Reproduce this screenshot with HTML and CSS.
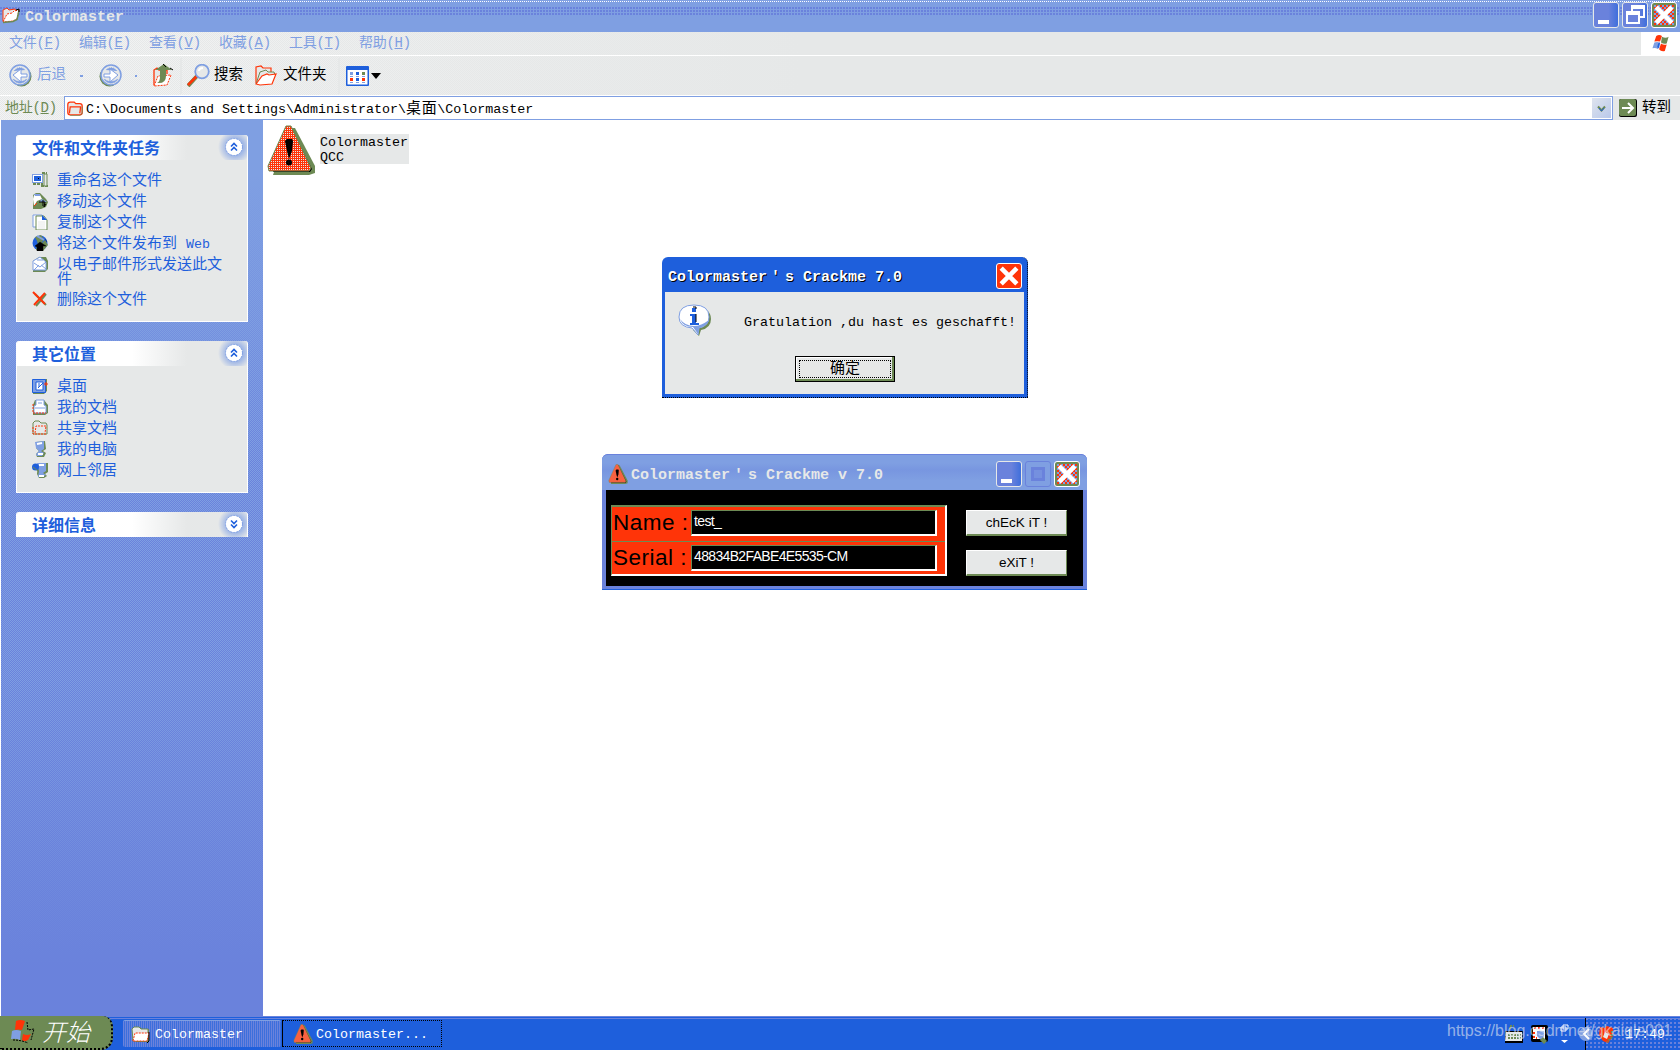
FILE: index.html
```html
<!DOCTYPE html>
<html lang="zh-CN">
<head>
<meta charset="utf-8">
<title>Colormaster</title>
<link rel="stylesheet" href="styles.css">
</head>
<body>
<svg class="defs" width="0" height="0">
  <defs>
    <pattern id="redmesh" width="2" height="2" patternUnits="userSpaceOnUse"><rect width="2" height="2" fill="#ff3408"/><path d="M0 0h1v1H0z" fill="#e6e8e8"/></pattern>
    <symbol id="warn" viewBox="0 0 48 50">
      <path d="M22 3h6l20 38v7l-6 2H6z" fill="#6d8a54"/>
      <path d="M24 2l21 42-2 3H6z" fill="#000"/>
      <path d="M19 1h5l20 42-2 3H2l-1-5z" fill="url(#redmesh)" stroke="#6d8a54"/>
      <path d="M18 16l2-2h5l1 2-1 10-3 8-2-8z"/><circle cx="22" cy="37.500" r="3"/>
    </symbol>
    <symbol id="folder" viewBox="0 0 20 18">
      <path d="M3 3l1-2h5l2 2h7v13H5z" fill="#6d8a54"/>
      <path d="M1 3l2-2h5l2 2h7v3L16 15H2z" fill="#e6e8e8" stroke="#6d8a54"/>
      <path d="M2 15L4 7h14l-2 8z" fill="#fff" stroke="#ff3408" stroke-dasharray="2 1"/>
      <path d="M18 6v9l-2 2" fill="none" stroke="#000"/>
    </symbol>
    <symbol id="openfolder" viewBox="0 0 18 17">
      <path d="M1 14V3l4-2 2 2 6-1 1 3z" fill="#e6e8e8" stroke="#ff3408"/>
      <path d="M1 15l4-8 5-1 2-2 5-1-2 9-4 2z" fill="#fff" stroke="#ff3408" stroke-dasharray="2 1"/>
      <path d="M1 15.500l10-1 4-2 2-9" fill="none" stroke="#6d8a54" stroke-width="1.500"/><path d="M14 3l3-1v3" fill="none" stroke="#000"/>
    </symbol>
    <symbol id="flag" viewBox="0 0 20 20">
      <path d="M5 2q3-2 6 0L9 8q-3-1-6 0z" fill="#ff3408"/><path d="M11 3q4 2 7 0l-2 7q-3 1-6-1z" fill="#6d8a54"/>
      <path d="M3 9q3-1 6 0l-2 7q-3-2-6-1z" fill="#7f9fe2"/><path d="M10 10q3 2 6 1l-2 7q-4 1-6-2z" fill="#ff3408"/>
      <path d="M7 10l2-1-1 6-2-1z" fill="#1e5fdc"/>
    </symbol>
    <symbol id="cross" viewBox="0 0 26 26"><path d="M4.500 4.500l17 17M21.500 4.500l-17 17" stroke="#fff" stroke-width="5" fill="none"/></symbol>
    <symbol id="ball" viewBox="0 0 23 23"><circle cx="12.500" cy="12.500" r="10" fill="#6d8a54"/><circle cx="11" cy="11" r="10" fill="#e6e8e8" stroke="#7f9fe2" stroke-width="1.500"/><path d="M4 15a8 8 0 0 0 14 0q-7 5-14 0M5 7q5-6 11-1" fill="#7f9fe2" stroke="#7f9fe2" stroke-dasharray="1 1"/><path d="M18 10h-6V5l-8 6 8 7v-5h6z" fill="#fff" stroke="#7f9fe2"/></symbol>
    <symbol id="chev" viewBox="0 0 18 18"><circle cx="9" cy="9" r="8.500" fill="#fff" stroke="#7f9fe2" stroke-dasharray="2 1"/><path d="M6 8.500l3-3 3 3M6 12.500l3-3 3 3" fill="none" stroke="#1e5fdc" stroke-width="1.600"/></symbol>
  </defs>
</svg>

<div class="screen">
  <header class="titlebar">
    <svg class="ico20"><use href="#openfolder"/></svg>
    <span class="caption">Colormaster</span>
    <div class="winbtns">
      <i class="wb min"></i><i class="wb restore"><b></b><b></b></i><i class="wb close dim"><svg><use href="#cross"/></svg></i>
    </div>
  </header>

  <nav class="menubar">
    <div class="menus">
      <span>文件(<u>F</u>)</span><span>编辑(<u>E</u>)</span><span>查看(<u>V</u>)</span><span>收藏(<u>A</u>)</span><span>工具(<u>T</u>)</span><span>帮助(<u>H</u>)</span>
    </div>
    <div class="brand"><svg width="20" height="19"><use href="#flag"/></svg></div>
  </nav>

  <div class="toolbar">
    <svg class="back" width="23" height="23"><use href="#ball"/></svg><span class="off lbl-back">后退</span><i class="tick"></i>
    <svg class="fwd" width="23" height="23"><use href="#ball"/></svg><i class="tick second"></i>
    <svg class="up" width="20" height="23" viewBox="0 0 20 23"><path d="M1 21V6l3-2 2 2h8v4" fill="#e6e8e8" stroke="#ff3408" stroke-width="1.300"/><path d="M1 22l4-10 13-1-4 10z" fill="#fff" stroke="#ff3408" stroke-dasharray="2 1"/><path d="M11 0L2 6h5v7q0 5-3 6 9 1 9-7V6h6z" fill="#6d8a54"/><path d="M10 0l3 3M17 4l3 2" stroke="#000"/></svg>
    <i class="sep"></i>
    <svg class="search" width="23" height="23" viewBox="0 0 23 23"><path d="M10 12L1 22" stroke="#6d8a54" stroke-width="4"/><path d="M10 12L1 21" stroke="#ff3408" stroke-width="2.500"/><circle cx="15" cy="7.500" r="6.800" fill="#e6e8e8" stroke="#7f9fe2" stroke-width="1.800"/><path d="M12 7q0-3 4-3" stroke="#fff" stroke-width="2" fill="none"/></svg>
    <span class="lbl-search">搜索</span>
    <svg class="folders" width="22" height="21" viewBox="0 0 22 21"><path d="M1 18V2l5-1 2 2h8v5" fill="#e6e8e8" stroke="#ff3408" stroke-width="1.200"/><path d="M1 19L5 7l6-2 2 2h6l1 3" fill="#e6e8e8" stroke="#6d8a54"/><path d="M1 19l6-8 5-2 2 1 7-1-4 10-12 1z" fill="#fff" stroke="#ff3408" stroke-width="1.200"/></svg>
    <span class="lbl-folders">文件夹</span>
    <i class="sep sep2"></i>
    <svg class="view" width="23" height="20" viewBox="0 0 23 20"><rect width="23" height="20" rx="1" fill="#1e5fdc"/><path d="M1.500 4h20v14.500h-20z" fill="#fff"/><g fill="#7f9fe2"><path d="M4 6h3v3H4zM4 16h3v1H4zM10 16h3v1h-3zM16 16h3v1h-3zM4 10h3v1H4zM10 10h3v1h-3zM16 10h3v1h-3z"/></g><path d="M10 6h3v3h-3zM10 12h3v3h-3z" fill="#1e5fdc"/><path d="M16 6h3v3h-3z" fill="#6d8a54"/><path d="M4 12h3v3H4zM16 12h3v3h-3z" fill="#ff3408"/></svg>
    <i class="drop"></i>
  </div>

  <div class="address">
    <span class="addr-label">地址(<u>D</u>)</span>
    <div class="addr-box">
      <svg width="16" height="15" viewBox="0 0 20 18"><path d="M1 4q0-3 3-3h5l2 2h5q3 0 3 3v8q0 3-3 3H4q-3 0-3-3z" fill="#e6e8e8" stroke="#ff3408" stroke-width="1.600"/><path d="M3 15l1-8h13l-1 8" fill="none" stroke="#ff3408" stroke-width="1.600"/><path d="M19 7v8l-3 3H4" fill="none" stroke="#6d8a54"/></svg>
      <span>C:\Documents and Settings\Administrator\<b class="han">桌面</b>\Colormaster</span>
      <i class="combo"><svg width="9" height="7"><path d="M1 1.500l3.500 4 3.500-4" fill="none" stroke="#6d8a54" stroke-width="2"/><path d="M2 3l2.500 3L7 3" fill="none" stroke="#1e5fdc"/></svg></i>
    </div>
    <svg class="go" width="18" height="18"><rect width="18" height="18" rx="2" fill="#000"/><rect width="17" height="17" rx="2" fill="#6d8a54"/><path d="M3 9h11M9 4l5 5-5 5" fill="none" stroke="#fff" stroke-width="2"/></svg>
    <span>转到</span>
  </div>

  <main class="main">
    <aside class="side">
      <section class="panel">
        <h2><span>文件和文件夹任务</span><svg><use href="#chev"/></svg></h2>
        <ul class="tasks">
          <li><svg viewBox="0 0 16 16"><path d="M0 2h11v9H0z" fill="#7f9fe2"/><path d="M1 3h9v7H1z" fill="#fff"/><path d="M2 4h7v5H2z" fill="#1e5fdc"/><path d="M1 12h10M10 1h5M9 14h7" stroke="#6d8a54" stroke-width="2" stroke-dasharray="3 1"/><path d="M12 2h3v12h-3z" fill="#e6e8e8" stroke="#6d8a54"/><path d="M6 6h1v1H6z"/></svg><span>重命名这个文件</span></li>
          <li><svg viewBox="0 0 16 16"><path d="M1 2l3-2h4l3 3 3 3 2 3-2 5-5 2H1z" fill="#6d8a54"/><path d="M2 2h6l2 4-5 2-3 5-1-7z" fill="#fff"/><path d="M2 1h6v2H3zM7 9l3-3 5 3" fill="#7f9fe2"/><path d="M7 9h6l-1 5 2-3M11 7v6" fill="none" stroke="#000"/><path d="M2 13l3-3" stroke="#ff3408"/></svg><span>移动这个文件</span></li>
          <li><svg viewBox="0 0 16 16"><path d="M1 1h9v12H1z" fill="#fff" stroke="#7f9fe2"/><path d="M4 2h8l3 4v10H4z" fill="#fff" stroke="#6d8a54"/><path d="M10 1l5 5h-5z" fill="#1e5fdc"/><path d="M6 8h7M6 10h7M6 12h7M6 14h7" stroke="#e6e8e8"/></svg><span>复制这个文件</span></li>
          <li><svg viewBox="0 0 16 16"><circle cx="8" cy="8" r="7.500" fill="#1e5fdc"/><path d="M3 2l6-2 3 4-3 5-3 1-1-4zM9 9l4-4 3 5-5 6-7-1 1-4z" fill="#6d8a54"/><path d="M3 11l5-4 6 4h-3v5H5v-4zM13 4l2 3" stroke="#000" stroke-width=".4"/><path d="M5 1l7 4" stroke="#7f9fe2" stroke-width="2"/></svg><span>将这个文件发布到 <small>Web</small></span></li>
          <li class="two"><svg viewBox="0 0 16 16"><path d="M1 5l6-4h7l2 4v8l-3 3H1z" fill="#6d8a54"/><path d="M1 5l7-4 6 5v8H1z" fill="#fff" stroke="#7f9fe2"/><path d="M2 7l6 4 6-5M2 14l5-5M14 13l-5-4M5 4h6" fill="none" stroke="#7f9fe2"/></svg><span>以电子邮件形式发送此文<br>件</span></li>
          <li><svg viewBox="0 0 16 16"><path d="M3 3l11 11M14 3L4 15" stroke="#6d8a54" stroke-width="2"/><path d="M1 1l12 12M13 2L2 14" stroke="#ff3408" stroke-width="2"/></svg><span>删除这个文件</span></li>
        </ul>
      </section>
      <section class="panel places">
        <h2><span>其它位置</span><svg><use href="#chev"/></svg></h2>
        <ul class="tasks">
          <li><svg viewBox="0 0 16 16"><path d="M2 1h13v12l-3 3H1z" fill="#6d8a54"/><path d="M.5 1.500h13v13H.5z" fill="#7f9fe2" stroke="#1e5fdc"/><path d="M4 4h7v8H4z" fill="#fff" stroke="#1e5fdc"/><path d="M6 10l5-5M7 5v4" stroke="#1e5fdc"/><path d="M12 6h4M14 4v4" stroke="#ff3408"/></svg><span>桌面</span></li>
          <li><svg viewBox="0 0 16 16"><path d="M3 1h9l4 5v8l-3 2H1V6z" fill="#6d8a54"/><path d="M2 7l2-1V1h8v5l2 1v7H2z" fill="#fff" stroke="#7f9fe2"/><path d="M1 5v9h13" fill="none" stroke="#ff3408" stroke-dasharray="2 1"/><path d="M6 4h4M3 9h10" stroke="#7f9fe2"/></svg><span>我的文档</span></li>
          <li><svg viewBox="0 0 16 16"><path d="M1 14V3l2-2h4l2 2h5l1 2v9z" fill="#e6e8e8" stroke="#6d8a54"/><path d="M1 7v7h13M3 13l1-7h10l-1 7" fill="none" stroke="#ff3408" stroke-dasharray="2 1"/></svg><span>共享文档</span></li>
          <li><svg viewBox="0 0 16 16"><path d="M4 1l9-1 1 8-3 2 3 2-2 4H5l-1-3 3-3-3-3z" fill="#6d8a54"/><path d="M3 1l9-1v8l-3 2 3 2-2 3H5l-1-2 3-3-3-3z" fill="#7f9fe2"/><path d="M5 3l5-1M6 13h5" stroke="#fff" stroke-width="2"/></svg><span>我的电脑</span></li>
          <li><svg viewBox="0 0 16 16"><path d="M6 1h10v9l-3 2 2 2-3 2H7L5 12z" fill="#6d8a54"/><path d="M5 1h9v8l-3 2 3 2-4 2H6l1-6z" fill="#7f9fe2"/><circle cx="3.500" cy="5" r="3.500" fill="#1e5fdc"/><path d="M7 3h5M7 14h5" stroke="#fff" stroke-width="2"/><path d="M1 5l5 4" stroke="#6d8a54"/></svg><span>网上邻居</span></li>
        </ul>
      </section>
      <section class="panel folded"><h2><span>详细信息</span><svg class="down"><use href="#chev"/></svg></h2></section>
    </aside>
    <div class="files">
      <div class="file"><svg width="48" height="50"><use href="#warn"/></svg><p>Colormaster<br>QCC</p></div>
    </div>
  </main>

  <footer class="taskbar">
    <div class="start"><svg width="25" height="25" viewBox="0 0 25 25"><path d="M6 1q4-2 9 0l-3 9q-4-1-7 0z" fill="#ff3408"/><path d="M2 11q4-2 9 0l-1 9q-4-2-9-1z" fill="#7f9fe2"/><path d="M13 14q4 2 8 0l-3 6q-4 2-6 0z" fill="#ff3408"/><path d="M17 2l1 8 6-1-3 11M3 20q8 0 15 3" fill="none" stroke="#000" stroke-dasharray="2 1"/></svg><span>开始</span></div>
    <div class="task"><svg class="ico20"><use href="#folder"/></svg><span>Colormaster</span></div>
    <div class="task on"><svg class="ico20"><use href="#warn"/></svg><span>Colormaster...</span></div>
    <div class="tray">
      <svg width="20" height="19" viewBox="0 0 20 19"><path d="M1 6h18v12H1z" fill="#000"/><path d="M2 7h16v9H1z" fill="#e6e8e8"/><path d="M4 10h13M4 13h13M6 4V1h4" fill="none" stroke="#6d8a54" stroke-width="2" stroke-dasharray="2 1"/></svg>
      <svg class="t2" width="18" height="19" viewBox="0 0 18 19"><rect width="17" height="17" rx="2"/><path d="M2 2h12v12H2z" fill="#fff"/><path d="M3 3h10M3 7v6h3" fill="none" stroke="#ff3408" stroke-width="2" stroke-dasharray="2 2"/><path d="M6 6h7v5l-3 4-4-4z" fill="#7f9fe2"/><path d="M12 12l4 4-3 3-4-4z" fill="#6d8a54"/></svg>
      <svg class="t3" width="9" height="20" viewBox="0 0 9 20"><path d="M3 1h5v4H3zM1 3h5v4H1z" fill="#1e5fdc" stroke="#fff"/><path d="M1 16h7l-3.500 3z" fill="#fff"/></svg>
      <div class="notify">
        <svg class="t4" width="14" height="16" viewBox="0 0 14 16"><circle cx="7" cy="8" r="7" fill="#7f9fe2"/><path d="M10 3L5 8l5 5" fill="none" stroke="#fff" stroke-width="2"/></svg>
        <svg class="t5" width="15" height="17" viewBox="0 0 15 17"><path d="M1 1l4 1 3-2 6 2v8l-5 7-5-2-4-6z" fill="#ff3408"/><path d="M6 6l4 2-2 5-4-2z" fill="#e6e8e8"/><path d="M13 5v6l-5 5" fill="none" stroke="#6d8a54" stroke-width="2" stroke-dasharray="2 1"/></svg>
        <span>17:49</span>
      </div>
    </div>
  </footer>

  <div class="mark">https://blog.csdn.net/gkaigle001</div>

  <div class="win msgbox">
    <div class="wtitle"><span>Colormaster<em>′</em>s Crackme 7.0</span><i class="wb close"><svg><use href="#cross"/></svg></i></div>
    <div class="msgbody">
      <div class="msgline">
        <svg width="34" height="33" viewBox="0 0 34 33"><path d="M18 3q15 1 15 12 0 9-10 11l-2 6-6-6z" fill="#6d8a54"/><path d="M16 1q15 0 15 12 0 9-10 11l-1 7-6-7Q1 23 1 13 1 1 16 1z" fill="#fff" stroke="#7f9fe2"/><path d="M2 15q3 8 13 8l5 7 1-6q8-2 10-8-8 6-15 6Q7 22 2 15z" fill="#7f9fe2"/><path d="M14 4h4v4h-4zM12 10h6v9h3v2h-9v-2h2v-7h-2z" fill="#1e5fdc"/><path d="M15 3h3v2M18 10v8" stroke="#000" fill="none"/></svg>
        <span>Gratulation ,du hast es geschafft!</span>
      </div>
      <div class="ok"><span>确定</span></div>
    </div>
  </div>

  <div class="win crackme">
    <div class="wtitle"><svg width="20" height="20"><use href="#warn"/></svg><span>Colormaster<em>′</em>s Crackme v 7.0</span><i class="wb min"></i><i class="wb maxoff"></i><i class="wb close dim"><svg><use href="#cross"/></svg></i></div>
    <div class="crackbody">
      <div class="form">
        <div class="row"><label>Name :</label><div class="field">test_</div></div>
        <div class="row"><label>Serial :</label><div class="field serial">48834B2FABE4E5535-CM</div></div>
      </div>
      <div class="acts"><div class="act">chEcK iT !</div><div class="act">eXiT !</div></div>
    </div>
  </div>
</div>
</body>
</html>
```
FILE: styles.css
```css
:root {
  --sky: #7f9fe2;
  --peri: #6a82dc;
  --blue: #1e5fdc;
  --face: #e6e8e8;
  --moss: #6d8a54;
  --red: #ff3408;
}
* { box-sizing: border-box; }
body {
  margin: 0;
  font: 13.33px/15px "Liberation Mono", "Noto Sans CJK SC", monospace;
  color: #000;
}
.defs { position: absolute; }
i, em { font-style: normal; }
svg { display: block; flex: none; }
.ico20 { width: 20px; height: 20px; }
.screen {
  position: relative;
  width: 1680px;
  height: 1050px;
  overflow: hidden;
  display: flex;
  flex-direction: column;
  background: #fff;
}

/* main window caption */
.titlebar {
  height: 32px;
  flex: none;
  display: flex;
  align-items: center;
  padding: 0 3px 2px 2px;
  background:
    radial-gradient(circle at 1px 1px, var(--peri) 0.8px, transparent 1px) 0 7px / 3px 3px repeat-x,
    radial-gradient(circle at 1px 1px, var(--peri) 0.8px, transparent 1px) 0 10px / 3px 3px repeat-x,
    radial-gradient(circle at 1px 1px, var(--peri) 0.8px, transparent 1px) 0 13px / 3px 3px repeat-x,
    repeating-linear-gradient(90deg, #fff 0 1px, var(--sky) 1px 2px) 12px 1px / 100% 1px no-repeat,
    var(--sky);
}
.caption { flex: 1; margin: 5px 0 0 5px; font-size: 15px; font-weight: bold; color: var(--face); }
.titlebar .ico20 { width: 18px; height: 17px; }
.winbtns { display: flex; gap: 3px; margin-right: -1px; }
.titlebar .winbtns { margin-right: 0; }
.wb {
  position: relative;
  width: 26px;
  height: 26px;
  flex: none;
  border: 1px solid var(--face);
  border-radius: 3px;
  background: linear-gradient(90deg, var(--peri) 60%, #3f6fdc);
}
.wb svg { width: 24px; height: 24px; }
.min::after { content: ""; position: absolute; left: 4px; bottom: 3px; width: 11px; height: 4px; background: #fff; }
.restore b { position: absolute; border: 2px solid #fff; border-top-width: 4px; width: 14px; height: 13px; left: 8px; top: 2px; }
.restore b + b { left: 3px; top: 8px; background: var(--peri); }
.close { background: var(--red); }
.close.dim {
  background: repeating-conic-gradient(var(--red) 0 25%, var(--sky) 0 50%) 0 0 / 4px 4px;
  border: 1px solid #fff;
  box-shadow: inset 0 0 0 2px var(--moss);
}
.maxoff { border-color: var(--peri); background: var(--sky); }
.maxoff::after { content: ""; position: absolute; inset: 5px; border: 3px solid var(--peri); background: #7590df; }

/* menu, toolbar and address bars */
.menubar, .toolbar, .address {
  flex: none;
  display: flex;
  align-items: center;
  background:
    linear-gradient(90deg, transparent, var(--face) 800px),
    repeating-conic-gradient(#f3f4f4 0 25%, var(--face) 0 50%) 0 0 / 2px 2px;
}
.menubar { height: 24px; border-bottom: 1px solid #fff; color: var(--sky); }
.menus { flex: 1; display: flex; gap: 16px; padding-left: 9px; }
.menus span { width: 54px; white-space: nowrap; }
.menus span, .addr-label { font-size: 14px; letter-spacing: -0.3px; }
.brand { width: 39px; height: 23px; background: #fff; padding: 2px 0 0 10px; }
.toolbar { height: 40px; border-bottom: 1px solid #fff; padding-left: 9px; font-size: 14.5px; }
.off { color: var(--sky); }
.lbl-back { margin-left: 5px; width: 43px; }
.tick { width: 3px; height: 2px; background: var(--sky); }
.tick.second { margin-left: 13px; width: 2px; }
.fwd { margin-left: 16px; transform: scaleX(-1); }
.up { margin-left: 16px; }
.sep { width: 2px; height: 36px; margin-left: 7px; background: var(--face); }
.search { margin-left: 5px; }
.lbl-search { margin-left: 4px; width: 41px; white-space: nowrap; }
.lbl-folders { margin-left: 6px; width: 51px; white-space: nowrap; }
.sep2 { margin-left: 4px; }
.view { margin-left: 6px; }
.drop { margin-left: 2px; border: 5px solid transparent; border-top: 6px solid #000; border-bottom: 0; }
.address { height: 24px; padding-left: 5px; font-size: 14.5px; }
.addr-label { width: 59px; color: var(--moss); }
.addr-box {
  width: 1549px;
  height: 24px;
  display: flex;
  align-items: center;
  gap: 3px;
  padding: 0 1px 0 2px;
  border: 1px solid var(--sky);
  background: #fff;
  font-size: 13.33px;
}
.addr-box span { flex: 1; padding-top: 2px; }
.han { font-weight: normal; font-size: 15px; line-height: 14px; letter-spacing: 0.7px; }
.combo { width: 19px; height: 20px; display: grid; place-items: center; background: linear-gradient(135deg, #dfe4ee, #b9c8ea); }
.go { margin: 0 5px 0 6px; }

/* explorer body */
.main { flex: 1; display: flex; min-height: 0; }
.side {
  width: 263px;
  padding: 15px 15px 0;
  border-left: 1px solid #fff;
  display: flex;
  flex-direction: column;
  gap: 19px;
  color: var(--blue);
  background:
    linear-gradient(180deg, var(--sky) 50px, transparent 340px, transparent 560px, var(--peri) 850px),
    repeating-conic-gradient(var(--sky) 0 25%, var(--peri) 0 50%) 0 0 / 2px 2px;
}
.panel { border: 1px solid #fff; border-top: 0; border-radius: 3px 3px 0 0; background: var(--face); height: 187px; flex: none; }
.panel.places { height: 152px; }
.panel.folded { height: 25px; border-bottom: 0; }
.panel h2 {
  margin: 0;
  height: 25px;
  padding: 0 4px 0 15px;
  display: flex;
  align-items: center;
  justify-content: space-between;
  font-size: 16px;
  border-radius: 3px 3px 0 0;
  background:
    radial-gradient(circle at 218px 12px, #a3b9e6 9px, transparent 17px),
    linear-gradient(90deg, #fff 115px, var(--face) 170px);
}
.panel h2 span { padding-top: 5px; }
.panel h2 svg { width: 18px; height: 18px; margin-bottom: 1px; }
.panel h2 .down { transform: scaleY(-1); }
.tasks { list-style: none; margin: 0; padding: 12px 0 0 15px; font-size: 15px; }
.tasks li { height: 21px; display: flex; align-items: flex-start; gap: 9px; white-space: pre; }
.tasks li span { padding-top: 2px; }
.tasks li.two { height: 35px; }
.tasks small { font-size: 13.33px; }
.tasks svg { width: 16px; height: 16px; }
.files { flex: 1; padding: 5px 0 0 4px; }
.file { display: flex; gap: 5px; align-items: flex-start; }
.file p { margin: 9px 0 0; background: var(--face); width: 89px; height: 30px; padding-top: 1px; }

/* taskbar */
.taskbar {
  height: 34px;
  flex: none;
  display: flex;
  background: linear-gradient(180deg, var(--peri) 1px, var(--blue) 1px 2px, var(--peri) 2px 3px, var(--blue) 3px);
  color: #fff;
}
.start {
  width: 113px;
  margin-right: 10px;
  display: flex;
  align-items: center;
  gap: 10px;
  padding-left: 10px;
  border-radius: 0 10px 12px 0;
  border-bottom: 2px dotted #000;
  border-right: 2px dotted #000;
  background: var(--moss);
  font-size: 24px;
  line-height: 30px;
}
.start span { transform: skewX(-14deg); font-weight: 300; padding-top: 5px; margin-left: -1px; }
.task {
  width: 158px;
  height: 27px;
  margin-top: 4px;
  padding: 1px 0 0 8px;
  display: flex;
  align-items: center;
  gap: 4px;
  background: repeating-linear-gradient(90deg, var(--peri) 0 1px, #3c6fdc 1px 2px);
  border-top: 1px solid var(--sky);
  border-radius: 2px;
}
.task.on { width: 160px; margin-left: 1px; padding-left: 10px; gap: 3px; background: var(--blue); border: 1px dotted #000; border-left: 1px solid #000; border-radius: 0; }
.tray { margin-left: auto; display: flex; align-items: center; width: 176px; padding-top: 2px; }
.t2 { margin-left: 7px; }
.t3 { margin-left: 11px; }
.notify {
  margin-left: 16px;
  height: 32px;
  width: 95px;
  border-left: 1px solid #000;
  display: flex;
  align-items: center;
  background: radial-gradient(circle at 1px 1px, var(--peri) 0.7px, transparent 1px) 0 0 / 4px 4px;
}
.t4 { margin-left: -7px; }
.t5 { margin: 0 11px 0 6px; }
.mark { position: absolute; left: 1447px; top: 1021px; font: 16px/20px "Liberation Sans", sans-serif; color: rgba(225, 230, 240, 0.62); }

/* floating windows */
.win { position: absolute; border-radius: 6px 6px 0 0; }
.wtitle { display: flex; align-items: center; font-size: 15px; font-weight: bold; }
.wtitle span { flex: 1; white-space: pre; padding-top: 3px; }
.wtitle em { display: inline-block; width: 18px; padding-left: 4px; }
.msgbox {
  left: 662px;
  top: 257px;
  width: 366px;
  height: 141px;
  padding: 0 3px 3px;
  background: var(--blue);
  border-right: 1px dotted #000;
  border-bottom: 1px dotted #000;
}
.msgbox .wtitle { height: 35px; padding: 2px 2px 0 3px; color: #fff; text-shadow: 1px 1px #000; }
.msgbox .wb { border-color: #fff; }
.msgbody { height: 102px; background: var(--face); padding: 12px 0 0 13px; }
.msgline { display: flex; height: 52px; gap: 32px; white-space: pre; }
.msgline span { padding-top: 11px; }
.ok {
  width: 100px;
  height: 26px;
  margin-left: 117px;
  border: 1px solid #000;
  box-shadow: inset -2px -2px var(--moss), inset 1px 1px #fff;
  padding: 3px;
  font-size: 15px;
}
.ok span { display: block; height: 18px; line-height: 18px; border: 1px dotted #000; text-align: center; }
.crackme {
  left: 602px;
  top: 454px;
  width: 485px;
  height: 136px;
  padding: 0 4px 4px;
  background: var(--peri);
  border-bottom: 1px solid var(--blue);
}
.crackme .wtitle {
  height: 36px;
  margin: 0 -4px;
  padding: 3px 7px 0 6px;
  gap: 3px;
  color: var(--face);
  border-radius: 6px 6px 0 0;
  border-top: 1px solid var(--peri);
  background: linear-gradient(180deg, var(--sky) 8px, #7896e0 15px, var(--sky) 25px);
}
.crackbody { height: 96px; background: #000; padding: 15px 0 0 5px; display: flex; gap: 19px; }
.form { width: 336px; height: 71px; background: var(--red); border: 1px solid var(--moss); border-right: 2px solid #fff; border-bottom: 2px solid #fff; }
.row { display: flex; height: 35px; border-top: 1px solid var(--moss); padding-top: 3px; }
.row label { width: 79px; padding: 3px 0 0 1px; font: 22.5px/20px "Liberation Sans", sans-serif; white-space: pre; letter-spacing: 0.5px; }
.field {
  width: 246px;
  height: 26px;
  border: 1px solid var(--moss);
  border-right: 2px solid #fff;
  border-bottom: 2px solid #fff;
  background: #000;
  color: #fff;
  font: 14px/21px "Liberation Sans", sans-serif;
  padding-left: 2px;
  letter-spacing: -0.65px;
}
.acts { padding-top: 5px; display: flex; flex-direction: column; gap: 14px; }
.act {
  width: 101px;
  height: 26px;
  background: var(--face);
  border: 1px solid #fff;
  border-right: 1px solid var(--moss);
  border-bottom: 2px solid var(--moss);
  text-align: center;
  font: 13.5px/23px "Liberation Sans", sans-serif;
}
```
